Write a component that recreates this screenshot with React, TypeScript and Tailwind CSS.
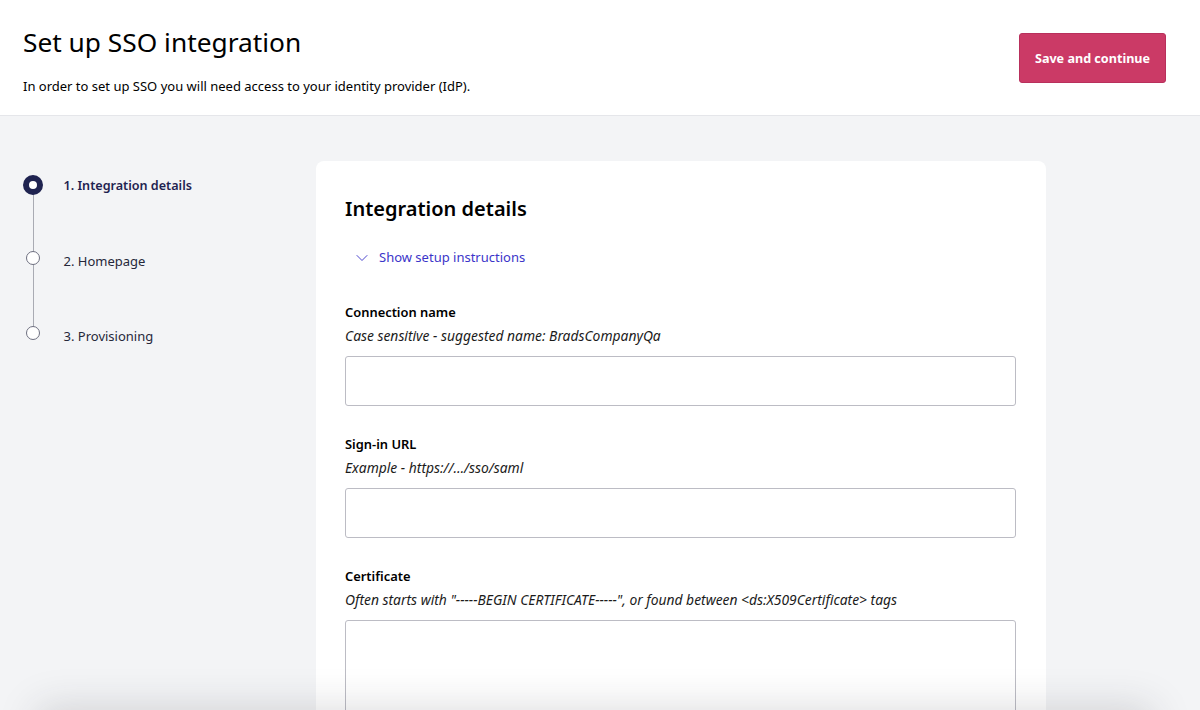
import { ChevronDown } from "lucide-react";

const font = { fontFamily: '"Noto Sans", sans-serif' };

const steps = [
  { label: "1. Integration details", active: true },
  { label: "2. Homepage", active: false },
  { label: "3. Provisioning", active: false },
];

const fields = [
  { label: "Connection name", hint: "Case sensitive - suggested name: BradsCompanyQa", h: "h-[50px]" },
  { label: "Sign-in URL", hint: "Example - https://…/sso/saml", h: "h-[50px]" },
  {
    label: "Certificate",
    hint: 'Often starts with "-----BEGIN CERTIFICATE-----", or found between <ds:X509Certificate> tags',
    h: "h-[160px]",
  },
];

function Stepper() {
  return (
    <ol className="w-[316px] shrink-0 pl-[23px] pt-[14px]">
      {steps.map((s, i) => (
        <li key={s.label} className="flex h-[75.5px] items-start">
          <div className="relative flex h-5 w-5 items-start justify-center">
            {i < steps.length - 1 && (
              <span className="absolute left-[9.5px] top-[8px] h-[76px] w-px bg-[#a9abb3]" />
            )}
            {s.active ? (
              <span className="relative h-5 w-5 rounded-full border-[6px] border-[#1f2350] bg-white" />
            ) : (
              <span className="relative h-[14px] w-[14px] rounded-full border border-[#6e7080] bg-white" />
            )}
          </div>
          <span
            className={
              s.active
                ? "ml-[20.5px] mt-[1px] text-[12.6px] leading-5 font-semibold text-[#1f2350]"
                : "ml-[20.5px] text-[13px] leading-5 text-[#26283a]"
            }
          >
            {s.label}
          </span>
        </li>
      ))}
    </ol>
  );
}

export default function App() {
  return (
    <div className="relative h-[710px] overflow-hidden bg-[#f3f4f6] text-black" style={font}>
      <header className="flex h-[116px] items-start justify-between border-b border-[#e5e6ea] bg-white pl-[23px] pr-[34px]">
        <div>
          <h1 className="mt-[23px] text-[26.3px] leading-[38px] font-normal">Set up SSO integration</h1>
          <p className="mt-[15px] text-[13px] leading-[20px]">
            In order to set up SSO you will need access to your identity provider (IdP).
          </p>
        </div>
        <button className="mt-[33px] h-[50px] w-[147px] rounded-[3px] border border-[#b8305c] bg-[#cb3a66] pt-[2px] text-[12.6px] font-bold text-white">
          Save and continue
        </button>
      </header>

      <main className="flex pt-[45px]">
        <Stepper />
        <section className="w-[730px] rounded-t-lg bg-white px-[29px] pt-[34px]">
          <h2 className="text-[20px] leading-[28px] font-semibold">Integration details</h2>
          <button className="mt-[25px] flex h-5 items-center text-[13px] text-[#3b35c9]">
            <ChevronDown className="ml-[7px] h-5 w-5" strokeWidth={1.1} />
            <span className="ml-[7px]">Show setup instructions</span>
          </button>
          <form className="mt-[34px] flex flex-col gap-[28px]">
            {fields.map((f) => (
              <div key={f.label}>
                <div className="text-[12.9px] leading-[20px] font-semibold">{f.label}</div>
                <div className="mt-[4px] text-[13.85px] leading-[20px] italic text-[#1b1b1b]">{f.hint}</div>
                <div className={`mt-[10px] ${f.h} w-[671px] rounded-[3px] border border-[#bcbcc4] bg-white`} />
              </div>
            ))}
          </form>
        </section>
      </main>

      {/* footer shadow coming in from under the fold */}
      <div className="pointer-events-none absolute left-[50px] top-[720px] h-10 w-[1090px] shadow-[0_0_40px_12px_rgba(40,40,50,0.17)]" />
    </div>
  );
}
